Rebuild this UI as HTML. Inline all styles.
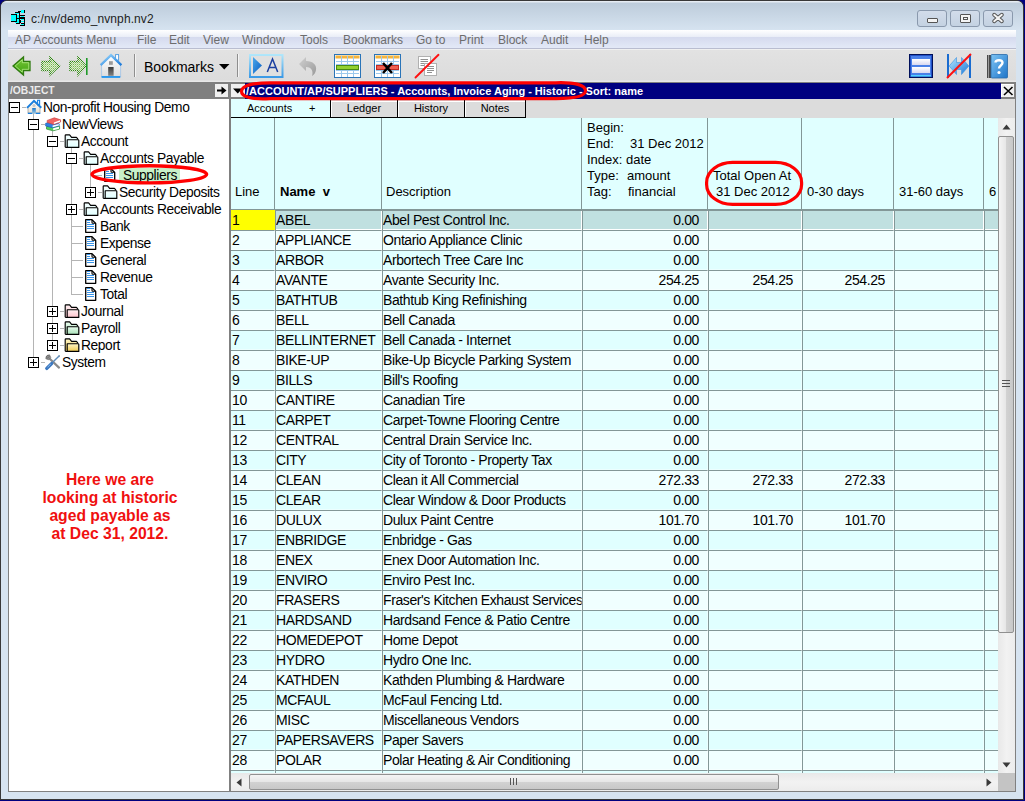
<!DOCTYPE html>
<html><head><meta charset="utf-8">
<style>
*{margin:0;padding:0;box-sizing:border-box}
html,body{width:1025px;height:801px;overflow:hidden;background:#000080}
body{position:relative;font-family:"Liberation Sans",sans-serif;font-size:13px;color:#000}
.a{position:absolute}
.t{position:absolute;white-space:pre;line-height:20px;height:20px}
.r{text-align:right}
.c{font-size:14px;letter-spacing:-0.4px}
.tr{font-size:13.8px;letter-spacing:-0.4px}
svg{position:absolute;overflow:visible}
</style></head><body>

<div class="a" style="left:0;top:0;width:1025px;height:801px;background:#000080"></div>
<div class="a" style="left:0;top:0;width:1024px;height:800px;background:#383838;border-radius:7px 7px 0 0"></div>
<div class="a" style="left:1px;top:1px;width:1022px;height:798px;background:#d6e3f0;border-radius:6px 6px 0 0"></div>
<div class="a" style="left:1px;top:1px;width:1022px;height:29px;background:linear-gradient(#e6ecf3 0,#e6ecf3 1px,#bdccdb 2px,#d6e3f0 29px);border-radius:6px 6px 0 0"></div>
<svg style="left:10px;top:10px" width="16" height="17" viewBox="0 0 16 17" shape-rendering="crispEdges">
<rect x="1" y="4" width="6" height="1" fill="#000"/><rect x="1" y="5" width="5" height="6" fill="#00ffff"/>
<rect x="1" y="11" width="6" height="1" fill="#000"/><rect x="6" y="4" width="1" height="8" fill="#000"/>
<rect x="5" y="2" width="4" height="1" fill="#000"/><rect x="5" y="3" width="4" height="1" fill="#00ffff"/>
<rect x="8" y="1" width="3" height="1" fill="#000"/>
<rect x="11" y="0" width="3" height="3" fill="#00ffff"/><rect x="14" y="0" width="1" height="3" fill="#000"/>
<rect x="9" y="2" width="1" height="12" fill="#000"/>
<rect x="7" y="5" width="2" height="3" fill="#00ffff"/><rect x="7" y="8" width="2" height="1" fill="#000"/>
<rect x="10" y="5" width="5" height="1" fill="#000"/><rect x="11" y="6" width="3" height="1" fill="#00ffff"/>
<rect x="10" y="7" width="5" height="2" fill="#000"/><rect x="11" y="9" width="3" height="1" fill="#00ffff"/>
<rect x="14" y="9" width="1" height="4" fill="#000"/><rect x="11" y="11" width="3" height="1" fill="#00ffff"/>
<rect x="10" y="10" width="1" height="3" fill="#000"/>
<rect x="5" y="12" width="4" height="1" fill="#00ffff"/><rect x="7" y="9" width="2" height="3" fill="#00ffff"/>
<rect x="6" y="13" width="3" height="1" fill="#000"/>
<rect x="11" y="13" width="4" height="1" fill="#000"/><rect x="11" y="14" width="3" height="1" fill="#00ffff"/>
<rect x="10" y="15" width="5" height="1" fill="#000"/><rect x="14" y="13" width="1" height="3" fill="#000"/>
</svg>
<div class="t" style="left:31px;top:9px;font-size:12px;color:#1e1e1e;letter-spacing:0.1px">c:/nv/demo_nvnph.nv2</div>
<div class="a" style="left:917px;top:10px;width:30px;height:17px;border:1px solid #8a99ad;border-radius:3px;background:linear-gradient(#d2dcea,#c4d2e2)"></div><div class="a" style="left:927px;top:18px;width:11px;height:5px;border:1px solid #555;background:#f4f4f4;border-radius:1px"></div>
<div class="a" style="left:950px;top:10px;width:30px;height:17px;border:1px solid #8a99ad;border-radius:3px;background:linear-gradient(#d2dcea,#c4d2e2)"></div><div class="a" style="left:960px;top:14px;width:11px;height:9px;border:1px solid #555;background:#f4f4f4;border-radius:1px"></div><div class="a" style="left:963px;top:17px;width:5px;height:3px;border:1px solid #555"></div>
<div class="a" style="left:983px;top:10px;width:30px;height:17px;border:1px solid #8a99ad;border-radius:3px;background:linear-gradient(#d2dcea,#c4d2e2)"></div><svg style="left:992px;top:13px" width="12" height="10" viewBox="0 0 12 10"><path d="M2.2 1.8L9.8 8.2M9.8 1.8L2.2 8.2" stroke="#555" stroke-width="4" stroke-linecap="round"/><path d="M2.2 1.8L9.8 8.2M9.8 1.8L2.2 8.2" stroke="#f4f4f4" stroke-width="2" stroke-linecap="round"/></svg>
<div class="a" style="left:8px;top:30px;width:1008px;height:19px;background:linear-gradient(#ffffff 0,#e9edf7 7px,#d5daee 7px,#e3e9f7 18px);border-bottom:1px solid #b9bdd0"></div>
<div class="t" style="left:15px;top:31px;font-size:12px;line-height:19px;color:#6d6d6d">AP Accounts Menu</div>
<div class="t" style="left:137px;top:31px;font-size:12px;line-height:19px;color:#6d6d6d">File</div>
<div class="t" style="left:169px;top:31px;font-size:12px;line-height:19px;color:#6d6d6d">Edit</div>
<div class="t" style="left:203px;top:31px;font-size:12px;line-height:19px;color:#6d6d6d">View</div>
<div class="t" style="left:242px;top:31px;font-size:12px;line-height:19px;color:#6d6d6d">Window</div>
<div class="t" style="left:300px;top:31px;font-size:12px;line-height:19px;color:#6d6d6d">Tools</div>
<div class="t" style="left:343px;top:31px;font-size:12px;line-height:19px;color:#6d6d6d">Bookmarks</div>
<div class="t" style="left:416px;top:31px;font-size:12px;line-height:19px;color:#6d6d6d">Go to</div>
<div class="t" style="left:459px;top:31px;font-size:12px;line-height:19px;color:#6d6d6d">Print</div>
<div class="t" style="left:498px;top:31px;font-size:12px;line-height:19px;color:#6d6d6d">Block</div>
<div class="t" style="left:541px;top:31px;font-size:12px;line-height:19px;color:#6d6d6d">Audit</div>
<div class="t" style="left:584px;top:31px;font-size:12px;line-height:19px;color:#6d6d6d">Help</div>
<div class="a" style="left:8px;top:49px;width:1008px;height:33px;background:linear-gradient(#f0f0f0 0,#f0f0f0 1px,#e2e2e2 1px,#dcdcdc 31px,#e8e8e8 32px)"></div>
<svg style="left:12px;top:56px" width="20" height="21" viewBox="0 0 20 21">
<defs><linearGradient id="gA" x1="0" y1="0" x2="0" y2="1"><stop offset="0" stop-color="#78c838"/><stop offset="1" stop-color="#3ea010"/></linearGradient></defs>
<path d="M1 10L11.5 1V5.5H18V14.5H11.5V19Z" fill="url(#gA)" stroke="#2f7a10" stroke-width="1.3" stroke-linejoin="miter"/>
<path d="M3.2 10L10.3 3.8V6.7H16.8V13.3H10.3V16.2Z" fill="none" stroke="#b4ec88" stroke-width="0.8"/>
</svg>
<svg style="left:41px;top:56px" width="20" height="21" viewBox="0 0 20 21"><defs><pattern id="dp" width="2" height="2" patternUnits="userSpaceOnUse"><rect width="1" height="1" fill="#2f8a10"/><rect x="1" y="1" width="1" height="1" fill="#2f8a10"/></pattern><pattern id="dl" width="2" height="2" patternUnits="userSpaceOnUse"><rect width="1" height="1" fill="#78c848"/><rect x="1" y="1" width="1" height="1" fill="#a8e080"/></pattern></defs>
<path d="M1 5.5H9V1L18.5 10L9 19V14.5H1Z" fill="url(#dl)" stroke="url(#dp)" stroke-width="1.6"/>
</svg>
<svg style="left:69px;top:56px" width="20" height="21" viewBox="0 0 20 21">
<path d="M1 5.5H9V1L17 10L9 19V14.5H1Z" fill="url(#dl)" stroke="url(#dp)" stroke-width="1.6"/>
<rect x="17" y="2" width="1.6" height="17" fill="#1f9a2a"/>
</svg>
<svg style="left:99px;top:53px" width="25" height="26" viewBox="0 0 25 26">
<defs><linearGradient id="hw" x1="0" y1="0" x2="0" y2="1"><stop offset="0" stop-color="#fff"/><stop offset="1" stop-color="#dcdcdc"/></linearGradient>
<linearGradient id="hb" x1="0" y1="0" x2="1" y2="1"><stop offset="0" stop-color="#9ad8ff"/><stop offset="1" stop-color="#1a78d8"/></linearGradient>
<linearGradient id="hd" x1="0" y1="0" x2="0" y2="1"><stop offset="0" stop-color="#3a3a3a"/><stop offset="1" stop-color="#808080"/></linearGradient></defs>
<path d="M2.6 12.3V24H21.6V12.3L12 3Z" fill="url(#hw)" stroke="#8ab8e8" stroke-width="0.6"/>
<rect x="16.6" y="1.6" width="3" height="5.6" fill="#fff" stroke="#4a98e0" stroke-width="0.9"/>
<path d="M1.6 12.2L12 2.2L22.4 12.2" fill="none" stroke="url(#hb)" stroke-width="2.3"/>
<rect x="10" y="8.2" width="3.8" height="3.6" fill="#9a9a9a"/>
<rect x="9.2" y="14" width="5.4" height="8.8" fill="url(#hd)"/>
<rect x="2.6" y="23" width="18.6" height="1.9" fill="#2a98ee"/>
</svg>
<div class="a" style="left:134px;top:54px;width:1px;height:23px;background:#8e8e8e"></div>
<div class="a" style="left:135px;top:54px;width:1px;height:23px;background:#f4f4f4"></div>
<div class="t" style="left:144px;top:57px;font-size:14px;line-height:20px;color:#000">Bookmarks</div>
<svg style="left:219px;top:64px" width="11" height="6" viewBox="0 0 11 6"><path d="M0 0H10.5L5.25 5.5Z" fill="#000"/></svg>
<div class="a" style="left:237px;top:54px;width:1px;height:23px;background:#8e8e8e"></div>
<div class="a" style="left:238px;top:54px;width:1px;height:23px;background:#f4f4f4"></div>
<svg style="left:249px;top:54px" width="35" height="24" viewBox="0 0 35 24">
<defs><linearGradient id="ab" x1="0" y1="0" x2="0" y2="1"><stop offset="0" stop-color="#b0e6fa"/><stop offset="1" stop-color="#3b9ae6"/></linearGradient>
<linearGradient id="at" x1="0" y1="0" x2="1" y2="1"><stop offset="0" stop-color="#4aa8ec"/><stop offset="1" stop-color="#0a5cc0"/></linearGradient></defs>
<rect x="1" y="1" width="32.5" height="22" fill="#e0e0e0" stroke="url(#ab)" stroke-width="2"/>
<path d="M4 3V20L13 11.5Z" fill="url(#at)"/>
<path d="M18.3 18L23.5 5L28.7 18M20 13.6H27" fill="none" stroke="#1a3fa0" stroke-width="1.5"/>
</svg>
<svg style="left:298px;top:56px" width="20" height="20" viewBox="0 0 20 20">
<defs><linearGradient id="ug" x1="0" y1="0" x2="1" y2="1"><stop offset="0" stop-color="#d0d0d0"/><stop offset="1" stop-color="#9a9a9a"/></linearGradient></defs>
<path d="M1 8L8 1V5C15 5 19 9 18 14C17.5 17 16 19 14 20C15.5 16 14 11 8 11V15Z" fill="url(#ug)"/>
</svg>
<svg style="left:334px;top:54px" width="27" height="24" viewBox="0 0 27 24"><rect x="0.5" y="0.5" width="26" height="23" fill="#fff" stroke="#2a74b8"/><rect x="1.5" y="1.5" width="24" height="3" fill="#f4b43c"/><path d="M2 7.5H25" stroke="#9cc8ec" stroke-width="1"/><path d="M2 10.5H25" stroke="#9cc8ec" stroke-width="1"/><path d="M2 16.5H25" stroke="#9cc8ec" stroke-width="1"/><path d="M2 19.5H25" stroke="#9cc8ec" stroke-width="1"/><path d="M7.5 2V23" stroke="#9cc8ec" stroke-width="1"/><path d="M13.5 2V23" stroke="#9cc8ec" stroke-width="1"/><path d="M19.5 2V23" stroke="#9cc8ec" stroke-width="1"/><rect x="2.5" y="11.5" width="22" height="4" fill="#92d030" stroke="#4a8a10"/></svg>
<svg style="left:374px;top:54px" width="27" height="24" viewBox="0 0 27 24"><rect x="0.5" y="0.5" width="26" height="23" fill="#fff" stroke="#2a74b8"/><rect x="1.5" y="1.5" width="24" height="3" fill="#f4b43c"/><path d="M2 7.5H25" stroke="#9cc8ec" stroke-width="1"/><path d="M2 10.5H25" stroke="#9cc8ec" stroke-width="1"/><path d="M2 16.5H25" stroke="#9cc8ec" stroke-width="1"/><path d="M2 19.5H25" stroke="#9cc8ec" stroke-width="1"/><path d="M7.5 2V23" stroke="#9cc8ec" stroke-width="1"/><path d="M13.5 2V23" stroke="#9cc8ec" stroke-width="1"/><path d="M19.5 2V23" stroke="#9cc8ec" stroke-width="1"/><rect x="2.5" y="11.5" width="22" height="4" fill="#f06050" stroke="#c02a20"/><path d="M9 9L18 19M18 9L9 19" stroke="#000" stroke-width="2.6"/></svg>
<svg style="left:414px;top:54px" width="26" height="25" viewBox="0 0 26 25">
<rect x="4.5" y="2.5" width="12" height="12" fill="#fff" stroke="#b0b0b0"/>
<path d="M6.5 5.5H14M6.5 7.5H14M6.5 9.5H14M6.5 11.5H13" stroke="#909090"/>
<rect x="10.5" y="9.5" width="12" height="12" fill="#fff" stroke="#b0b0b0"/>
<path d="M13 12.5H20M13 14.5H20M13 16.5H20M13 18.5H18" stroke="#909090"/>
<path d="M1.5 23.5L24.5 0.8" stroke="#ff1010" stroke-width="1.9" stroke-linecap="round"/>
</svg>
<svg style="left:909px;top:54px" width="24" height="24" viewBox="0 0 24 24">
<defs><linearGradient id="sw" x1="0" y1="0" x2="0" y2="1"><stop offset="0" stop-color="#fff"/><stop offset="1" stop-color="#d8d8f0"/></linearGradient></defs>
<rect x="0.5" y="0.5" width="23" height="23" fill="#2050c8" stroke="#00105a"/>
<rect x="2" y="2" width="20" height="20" fill="#4a80e8"/>
<rect x="3" y="5" width="18" height="6" fill="url(#sw)"/>
<rect x="3" y="13" width="18" height="6" fill="url(#sw)"/>
<rect x="2" y="21" width="20" height="1.5" fill="#50d0ff"/>
</svg>
<svg style="left:946px;top:54px" width="26" height="24" viewBox="0 0 26 24">
<defs><linearGradient id="rb" x1="0" y1="0" x2="1" y2="1"><stop offset="0" stop-color="#b8e8ff"/><stop offset="1" stop-color="#1a78d8"/></linearGradient></defs>
<rect x="1" y="0" width="2" height="24" fill="#1a6cd0"/><rect x="23" y="0" width="2" height="24" fill="#1a6cd0"/>
<path d="M3.2 12L10.5 3.5V8.5H15.5V3.5L22.8 12L15.5 20.5V15.5H10.5V20.5Z" fill="url(#rb)" stroke="#3a90e0" stroke-width="0.6"/>
<path d="M1 24L25 0" stroke="#ff1010" stroke-width="1.9"/>
</svg>
<svg style="left:987px;top:54px" width="21" height="24" viewBox="0 0 21 24">
<defs><linearGradient id="hk" x1="0" y1="0" x2="1" y2="1"><stop offset="0" stop-color="#7cc4f4"/><stop offset="1" stop-color="#1f74c8"/></linearGradient></defs>
<rect x="0" y="1" width="4" height="23" fill="#4a4a4a"/>
<rect x="1" y="1" width="1" height="23" fill="#9a9a9a"/>
<rect x="4" y="0.5" width="16.5" height="23.5" rx="1" fill="url(#hk)" stroke="#2a6aa8" stroke-width="0.8"/>
<path d="M8.5 8.5C8.5 5.5 15.5 5.2 15.5 8.8C15.5 11.5 12 11.5 12 14.5" fill="none" stroke="#fff" stroke-width="2.4"/>
<circle cx="12" cy="18.5" r="1.6" fill="#fff"/>
</svg>
<div class="a" style="left:8px;top:82px;width:1008px;height:17px;background:#808080"></div>
<div class="t" style="left:10px;top:83px;height:16px;line-height:16px;font-size:10.3px;font-weight:bold;color:#ececec">/OBJECT</div>
<div class="a" style="left:215px;top:84px;width:13px;height:13px;background:#f0f0f0"></div>
<svg style="left:217px;top:86px" width="10" height="9" viewBox="0 0 10 9"><path d="M0 4.5H6" stroke="#000" stroke-width="2"/><path d="M4.5 0.5L9.5 4.5L4.5 8.5Z" fill="#000"/></svg>
<div class="a" style="left:231px;top:84px;width:14px;height:13px;background:#f0f0f0"></div>
<svg style="left:233px;top:88px" width="10" height="6" viewBox="0 0 10 6"><path d="M0 0.5H9.5L4.75 5.5Z" fill="#000"/></svg>
<div class="a" style="left:245px;top:83px;width:756px;height:16px;background:#000080"></div>
<div class="t" style="left:246px;top:83px;height:16px;line-height:16px;font-size:11px;font-weight:bold;color:#fff">/ACCOUNT/AP/SUPPLIERS - Accounts, Invoice Aging - Historic - Sort: name</div>
<div class="a" style="left:1001px;top:84px;width:13px;height:13px;background:#f0f0f0;border-top:1px solid #fff;border-left:1px solid #fff"></div>
<svg style="left:1003px;top:86px" width="11" height="10" viewBox="0 0 11 10"><path d="M1 1L9.5 9M9.5 1L1 9" stroke="#000" stroke-width="1.6"/></svg>
<div class="a" style="left:8px;top:99px;width:221px;height:693px;background:#fff;border-left:1px solid #808080;border-bottom:1px solid #808080"></div>
<div class="a" style="left:229px;top:99px;width:2px;height:693px;background:#808080"></div>
<div class="a" style="left:1015px;top:82px;width:1px;height:710px;background:#808080"></div>
<div class="a" style="left:231px;top:791px;width:785px;height:1px;background:#808080"></div>
<div class="a" style="left:33px;top:113px;width:1px;height:249px;background:#b4b4b4"></div>
<div class="a" style="left:52px;top:131px;width:1px;height:214px;background:#b4b4b4"></div>
<div class="a" style="left:71px;top:148px;width:1px;height:146px;background:#b4b4b4"></div>
<div class="a" style="left:90px;top:165px;width:1px;height:27px;background:#b4b4b4"></div>
<div class="a" style="left:9px;top:102px;width:11px;height:11px;border:1px solid #000;background:#fff"></div><div class="a" style="left:11px;top:107px;width:7px;height:1px;background:#000"></div>
<div class="a" style="left:22px;top:107px;width:4px;height:1px;background:#b4b4b4"></div>
<svg style="left:26px;top:99px" width="17" height="16" viewBox="0 0 17 16">
<defs><linearGradient id="th" x1="0" y1="0" x2="0" y2="1"><stop offset="0" stop-color="#ffffff"/><stop offset="1" stop-color="#e4e0d4"/></linearGradient>
<linearGradient id="td" x1="0" y1="0" x2="0" y2="1"><stop offset="0" stop-color="#1a78d0"/><stop offset="1" stop-color="#9cc8e0"/></linearGradient></defs>
<path d="M2 8.5V14H14V8.5L8 2.8Z" fill="url(#th)" stroke="#9a9a9a" stroke-width="0.7"/>
<circle cx="8" cy="6.5" r="1.6" fill="#c8c8c8"/>
<rect x="11.6" y="1.3" width="2" height="4.5" fill="#fff" stroke="#1a80e0" stroke-width="1.1"/>
<path d="M1 8.8L8 1.8L15.3 8.8" fill="none" stroke="#1a80e0" stroke-width="1.9" stroke-linejoin="miter"/>
<rect x="6.2" y="9" width="3.6" height="5.6" fill="url(#td)"/>
<path d="M1.8 14.3H6.2M9.8 14.3H14.3" stroke="#1a80e0" stroke-width="1.2"/>
</svg>
<div class="t tr" style="left:43px;top:98px;color:#000">Non-profit Housing Demo</div>
<div class="a" style="left:28px;top:119px;width:11px;height:11px;border:1px solid #000;background:#fff"></div><div class="a" style="left:30px;top:124px;width:7px;height:1px;background:#000"></div>
<div class="a" style="left:41px;top:124px;width:4px;height:1px;background:#b4b4b4"></div>
<svg style="left:45px;top:117px" width="17" height="15" viewBox="0 0 17 15">
<path d="M1.5 9.6L8 8.2L14.6 9.2V12.1L8 13.8L1.5 12.1Z" fill="#52d05c" stroke="#2a8a34" stroke-width="0.7"/>
<path d="M8.2 11.3L14 9.8V11.8L8.2 13.2Z" fill="#fff"/>
<path d="M0.6 6.3L6 5L14.2 6.8V8.7L7.5 10.8L0.6 9Z" fill="#2f80e4" stroke="#1a58b0" stroke-width="0.6"/>
<path d="M7.6 8.6L13.8 7.1V8.5L7.6 10.3Z" fill="#fff"/>
<path d="M2.2 3.4L9.3 0.8L15.6 2.8V5L8.7 7.6L2.2 5.5Z" fill="#f06262" stroke="#c03a3a" stroke-width="0.6"/>
<path d="M8.9 5.5L15 3.3V4.8L8.9 7.1Z" fill="#fff"/>
</svg>
<div class="t tr" style="left:62px;top:115px;color:#000">NewViews</div>
<div class="a" style="left:47px;top:136px;width:11px;height:11px;border:1px solid #000;background:#fff"></div><div class="a" style="left:49px;top:141px;width:7px;height:1px;background:#000"></div>
<div class="a" style="left:60px;top:141px;width:4px;height:1px;background:#b4b4b4"></div>
<svg style="left:64px;top:134px" width="16" height="15" viewBox="0 0 16 15">
<defs><linearGradient id="fg64_134" x1="0" y1="0" x2="0" y2="1"><stop offset="0" stop-color="#f4ffff"/><stop offset="1" stop-color="#e0ffff"/></linearGradient></defs>
<path d="M1.2 13.3V1.6Q1.2 0.9 1.9 0.9H5.6L7.6 3.3H12.4L13.6 4.6V5.6" fill="url(#fg64_134)" stroke="#000" stroke-width="1.15" stroke-linejoin="round"/>
<path d="M3.2 5.7H14.1Q14.8 5.7 14.8 6.4V13.4H3.2Z" fill="url(#fg64_134)" stroke="#000" stroke-width="1.15" stroke-linejoin="round"/>
<path d="M1.2 13.4H3.2" stroke="#000" stroke-width="1.15"/>
</svg>
<div class="t tr" style="left:81px;top:132px;color:#000">Account</div>
<div class="a" style="left:66px;top:153px;width:11px;height:11px;border:1px solid #000;background:#fff"></div><div class="a" style="left:68px;top:158px;width:7px;height:1px;background:#000"></div>
<div class="a" style="left:79px;top:158px;width:4px;height:1px;background:#b4b4b4"></div>
<svg style="left:83px;top:151px" width="16" height="15" viewBox="0 0 16 15">
<defs><linearGradient id="fg83_151" x1="0" y1="0" x2="0" y2="1"><stop offset="0" stop-color="#f4ffff"/><stop offset="1" stop-color="#e0ffff"/></linearGradient></defs>
<path d="M1.2 13.3V1.6Q1.2 0.9 1.9 0.9H5.6L7.6 3.3H12.4L13.6 4.6V5.6" fill="url(#fg83_151)" stroke="#000" stroke-width="1.15" stroke-linejoin="round"/>
<path d="M3.2 5.7H14.1Q14.8 5.7 14.8 6.4V13.4H3.2Z" fill="url(#fg83_151)" stroke="#000" stroke-width="1.15" stroke-linejoin="round"/>
<path d="M1.2 13.4H3.2" stroke="#000" stroke-width="1.15"/>
</svg>
<div class="t tr" style="left:100px;top:149px;color:#000">Accounts Payable</div>
<div class="a" style="left:90px;top:175px;width:12px;height:1px;background:#b4b4b4"></div>
<svg style="left:104px;top:168px" width="12" height="14" viewBox="0 0 12 14">
<path d="M0.7 0.7H7L10.7 4.4V13.3H0.7Z" fill="#fff" stroke="#000" stroke-width="1.3" stroke-linejoin="round"/>
<path d="M7 0.9V3.6Q7 4.3 7.7 4.3H10.5" fill="none" stroke="#000" stroke-width="1.1"/>
<path d="M2 1.5H5M2 3.5H5M2 5.5H9M2 7.5H9M2 9.5H9" stroke="#3a94e8" stroke-width="1"/>
</svg>
<div class="a" style="left:119px;top:168px;width:61px;height:13px;background:#c8f0c8"></div>
<div class="t tr" style="left:123px;top:166px;color:#000">Suppliers</div>
<div class="a" style="left:85px;top:187px;width:11px;height:11px;border:1px solid #000;background:#fff"></div><div class="a" style="left:87px;top:192px;width:7px;height:1px;background:#000"></div><div class="a" style="left:90px;top:189px;width:1px;height:7px;background:#000"></div>
<div class="a" style="left:98px;top:192px;width:4px;height:1px;background:#b4b4b4"></div>
<svg style="left:102px;top:185px" width="16" height="15" viewBox="0 0 16 15">
<defs><linearGradient id="fg102_185" x1="0" y1="0" x2="0" y2="1"><stop offset="0" stop-color="#f4ffff"/><stop offset="1" stop-color="#e0ffff"/></linearGradient></defs>
<path d="M1.2 13.3V1.6Q1.2 0.9 1.9 0.9H5.6L7.6 3.3H12.4L13.6 4.6V5.6" fill="url(#fg102_185)" stroke="#000" stroke-width="1.15" stroke-linejoin="round"/>
<path d="M3.2 5.7H14.1Q14.8 5.7 14.8 6.4V13.4H3.2Z" fill="url(#fg102_185)" stroke="#000" stroke-width="1.15" stroke-linejoin="round"/>
<path d="M1.2 13.4H3.2" stroke="#000" stroke-width="1.15"/>
</svg>
<div class="t tr" style="left:119px;top:183px;color:#000">Security Deposits</div>
<div class="a" style="left:66px;top:204px;width:11px;height:11px;border:1px solid #000;background:#fff"></div><div class="a" style="left:68px;top:209px;width:7px;height:1px;background:#000"></div><div class="a" style="left:71px;top:206px;width:1px;height:7px;background:#000"></div>
<div class="a" style="left:79px;top:209px;width:4px;height:1px;background:#b4b4b4"></div>
<svg style="left:83px;top:202px" width="16" height="15" viewBox="0 0 16 15">
<defs><linearGradient id="fg83_202" x1="0" y1="0" x2="0" y2="1"><stop offset="0" stop-color="#f4ffff"/><stop offset="1" stop-color="#e0ffff"/></linearGradient></defs>
<path d="M1.2 13.3V1.6Q1.2 0.9 1.9 0.9H5.6L7.6 3.3H12.4L13.6 4.6V5.6" fill="url(#fg83_202)" stroke="#000" stroke-width="1.15" stroke-linejoin="round"/>
<path d="M3.2 5.7H14.1Q14.8 5.7 14.8 6.4V13.4H3.2Z" fill="url(#fg83_202)" stroke="#000" stroke-width="1.15" stroke-linejoin="round"/>
<path d="M1.2 13.4H3.2" stroke="#000" stroke-width="1.15"/>
</svg>
<div class="t tr" style="left:100px;top:200px;color:#000">Accounts Receivable</div>
<div class="a" style="left:71px;top:226px;width:12px;height:1px;background:#b4b4b4"></div>
<svg style="left:85px;top:219px" width="12" height="14" viewBox="0 0 12 14">
<path d="M0.7 0.7H7L10.7 4.4V13.3H0.7Z" fill="#fff" stroke="#000" stroke-width="1.3" stroke-linejoin="round"/>
<path d="M7 0.9V3.6Q7 4.3 7.7 4.3H10.5" fill="none" stroke="#000" stroke-width="1.1"/>
<path d="M2 1.5H5M2 3.5H5M2 5.5H9M2 7.5H9M2 9.5H9" stroke="#3a94e8" stroke-width="1"/>
</svg>
<div class="t tr" style="left:100px;top:217px;color:#000">Bank</div>
<div class="a" style="left:71px;top:243px;width:12px;height:1px;background:#b4b4b4"></div>
<svg style="left:85px;top:236px" width="12" height="14" viewBox="0 0 12 14">
<path d="M0.7 0.7H7L10.7 4.4V13.3H0.7Z" fill="#fff" stroke="#000" stroke-width="1.3" stroke-linejoin="round"/>
<path d="M7 0.9V3.6Q7 4.3 7.7 4.3H10.5" fill="none" stroke="#000" stroke-width="1.1"/>
<path d="M2 1.5H5M2 3.5H5M2 5.5H9M2 7.5H9M2 9.5H9" stroke="#3a94e8" stroke-width="1"/>
</svg>
<div class="t tr" style="left:100px;top:234px;color:#000">Expense</div>
<div class="a" style="left:71px;top:260px;width:12px;height:1px;background:#b4b4b4"></div>
<svg style="left:85px;top:253px" width="12" height="14" viewBox="0 0 12 14">
<path d="M0.7 0.7H7L10.7 4.4V13.3H0.7Z" fill="#fff" stroke="#000" stroke-width="1.3" stroke-linejoin="round"/>
<path d="M7 0.9V3.6Q7 4.3 7.7 4.3H10.5" fill="none" stroke="#000" stroke-width="1.1"/>
<path d="M2 1.5H5M2 3.5H5M2 5.5H9M2 7.5H9M2 9.5H9" stroke="#3a94e8" stroke-width="1"/>
</svg>
<div class="t tr" style="left:100px;top:251px;color:#000">General</div>
<div class="a" style="left:71px;top:277px;width:12px;height:1px;background:#b4b4b4"></div>
<svg style="left:85px;top:270px" width="12" height="14" viewBox="0 0 12 14">
<path d="M0.7 0.7H7L10.7 4.4V13.3H0.7Z" fill="#fff" stroke="#000" stroke-width="1.3" stroke-linejoin="round"/>
<path d="M7 0.9V3.6Q7 4.3 7.7 4.3H10.5" fill="none" stroke="#000" stroke-width="1.1"/>
<path d="M2 1.5H5M2 3.5H5M2 5.5H9M2 7.5H9M2 9.5H9" stroke="#3a94e8" stroke-width="1"/>
</svg>
<div class="t tr" style="left:100px;top:268px;color:#000">Revenue</div>
<div class="a" style="left:71px;top:294px;width:12px;height:1px;background:#b4b4b4"></div>
<svg style="left:85px;top:287px" width="12" height="14" viewBox="0 0 12 14">
<path d="M0.7 0.7H7L10.7 4.4V13.3H0.7Z" fill="#fff" stroke="#000" stroke-width="1.3" stroke-linejoin="round"/>
<path d="M7 0.9V3.6Q7 4.3 7.7 4.3H10.5" fill="none" stroke="#000" stroke-width="1.1"/>
<path d="M2 1.5H5M2 3.5H5M2 5.5H9M2 7.5H9M2 9.5H9" stroke="#3a94e8" stroke-width="1"/>
</svg>
<div class="t tr" style="left:100px;top:285px;color:#000">Total</div>
<div class="a" style="left:47px;top:306px;width:11px;height:11px;border:1px solid #000;background:#fff"></div><div class="a" style="left:49px;top:311px;width:7px;height:1px;background:#000"></div><div class="a" style="left:52px;top:308px;width:1px;height:7px;background:#000"></div>
<div class="a" style="left:60px;top:311px;width:4px;height:1px;background:#b4b4b4"></div>
<svg style="left:64px;top:304px" width="16" height="15" viewBox="0 0 16 15">
<defs><linearGradient id="fg64_304" x1="0" y1="0" x2="0" y2="1"><stop offset="0" stop-color="#fff0f2"/><stop offset="1" stop-color="#ffc4cc"/></linearGradient></defs>
<path d="M1.2 13.3V1.6Q1.2 0.9 1.9 0.9H5.6L7.6 3.3H12.4L13.6 4.6V5.6" fill="url(#fg64_304)" stroke="#000" stroke-width="1.15" stroke-linejoin="round"/>
<path d="M3.2 5.7H14.1Q14.8 5.7 14.8 6.4V13.4H3.2Z" fill="url(#fg64_304)" stroke="#000" stroke-width="1.15" stroke-linejoin="round"/>
<path d="M1.2 13.4H3.2" stroke="#000" stroke-width="1.15"/>
</svg>
<div class="t tr" style="left:81px;top:302px;color:#000">Journal</div>
<div class="a" style="left:47px;top:323px;width:11px;height:11px;border:1px solid #000;background:#fff"></div><div class="a" style="left:49px;top:328px;width:7px;height:1px;background:#000"></div><div class="a" style="left:52px;top:325px;width:1px;height:7px;background:#000"></div>
<div class="a" style="left:60px;top:328px;width:4px;height:1px;background:#b4b4b4"></div>
<svg style="left:64px;top:321px" width="16" height="15" viewBox="0 0 16 15">
<defs><linearGradient id="fg64_321" x1="0" y1="0" x2="0" y2="1"><stop offset="0" stop-color="#eafcef"/><stop offset="1" stop-color="#a8e2b8"/></linearGradient></defs>
<path d="M1.2 13.3V1.6Q1.2 0.9 1.9 0.9H5.6L7.6 3.3H12.4L13.6 4.6V5.6" fill="url(#fg64_321)" stroke="#000" stroke-width="1.15" stroke-linejoin="round"/>
<path d="M3.2 5.7H14.1Q14.8 5.7 14.8 6.4V13.4H3.2Z" fill="url(#fg64_321)" stroke="#000" stroke-width="1.15" stroke-linejoin="round"/>
<path d="M1.2 13.4H3.2" stroke="#000" stroke-width="1.15"/>
</svg>
<div class="t tr" style="left:81px;top:319px;color:#000">Payroll</div>
<div class="a" style="left:47px;top:340px;width:11px;height:11px;border:1px solid #000;background:#fff"></div><div class="a" style="left:49px;top:345px;width:7px;height:1px;background:#000"></div><div class="a" style="left:52px;top:342px;width:1px;height:7px;background:#000"></div>
<div class="a" style="left:60px;top:345px;width:4px;height:1px;background:#b4b4b4"></div>
<svg style="left:64px;top:338px" width="16" height="15" viewBox="0 0 16 15">
<defs><linearGradient id="fg64_338" x1="0" y1="0" x2="0" y2="1"><stop offset="0" stop-color="#fff6c8"/><stop offset="1" stop-color="#f2cc50"/></linearGradient></defs>
<path d="M1.2 13.3V1.6Q1.2 0.9 1.9 0.9H5.6L7.6 3.3H12.4L13.6 4.6V5.6" fill="url(#fg64_338)" stroke="#000" stroke-width="1.15" stroke-linejoin="round"/>
<path d="M3.2 5.7H14.1Q14.8 5.7 14.8 6.4V13.4H3.2Z" fill="url(#fg64_338)" stroke="#000" stroke-width="1.15" stroke-linejoin="round"/>
<path d="M1.2 13.4H3.2" stroke="#000" stroke-width="1.15"/>
</svg>
<div class="t tr" style="left:81px;top:336px;color:#000">Report</div>
<div class="a" style="left:28px;top:357px;width:11px;height:11px;border:1px solid #000;background:#fff"></div><div class="a" style="left:30px;top:362px;width:7px;height:1px;background:#000"></div><div class="a" style="left:33px;top:359px;width:1px;height:7px;background:#000"></div>
<div class="a" style="left:41px;top:362px;width:4px;height:1px;background:#b4b4b4"></div>
<svg style="left:45px;top:354px" width="16" height="16" viewBox="0 0 16 16">
<path d="M4.2 4.2L14 13.6" stroke="#8a8a8a" stroke-width="2.2" stroke-linecap="round"/>
<path d="M1.2 2.8L2.8 1.2L4.2 2.6L2.6 4.2Z M0.8 4.8Q0.6 1 4.6 0.8L5.8 3.6L3.6 5.8Z" fill="#8e8e8e" stroke="#5a5a5a" stroke-width="0.5"/>
<path d="M6.5 9.5L13.8 2.2" stroke="#5c8ab8" stroke-width="1.4"/>
<path d="M13 1.6L15 1.2L14.6 3.2Z" fill="#4a78a8"/>
<path d="M1.8 14.4L6.6 9.6" stroke="#3c78c0" stroke-width="3.4" stroke-linecap="round"/>
<path d="M2.6 13.2L5.8 10" stroke="#8cc0f0" stroke-width="0.9"/>
</svg>
<div class="t tr" style="left:62px;top:353px;color:#000">System</div>
<div class="a" style="left:20px;top:471px;width:180px;text-align:center;color:#f01010;font-weight:bold;font-size:15.7px;line-height:18px">Here we are<br>looking at historic<br>aged payable as<br>at Dec 31, 2012.</div>
<div class="a" style="left:231px;top:99px;width:784px;height:19px;background:#dcdcdc"></div>
<div class="a" style="left:231px;top:99px;width:99px;height:18px;background:#e0ffff"></div>
<div class="a" style="left:330px;top:99px;width:1px;height:19px;background:#000"></div>
<div class="a" style="left:331px;top:101px;width:1px;height:16px;background:#fff"></div>
<div class="a" style="left:331px;top:101px;width:66px;height:1px;background:#fff"></div>
<div class="t" style="left:331px;top:99px;width:66px;text-align:center;font-size:11px;line-height:18px">Ledger</div>
<div class="a" style="left:397px;top:99px;width:1px;height:19px;background:#000"></div>
<div class="a" style="left:398px;top:101px;width:1px;height:16px;background:#fff"></div>
<div class="a" style="left:398px;top:101px;width:66px;height:1px;background:#fff"></div>
<div class="t" style="left:398px;top:99px;width:66px;text-align:center;font-size:11px;line-height:18px">History</div>
<div class="a" style="left:464px;top:99px;width:1px;height:19px;background:#000"></div>
<div class="a" style="left:465px;top:101px;width:1px;height:16px;background:#fff"></div>
<div class="a" style="left:465px;top:101px;width:60px;height:1px;background:#fff"></div>
<div class="t" style="left:465px;top:99px;width:60px;text-align:center;font-size:11px;line-height:18px">Notes</div>
<div class="a" style="left:525px;top:99px;width:1px;height:19px;background:#000"></div>
<div class="a" style="left:231px;top:117px;width:295px;height:1px;background:#000"></div>
<div class="t" style="left:247px;top:99px;font-size:11px;line-height:18px">Accounts</div>
<div class="t" style="left:309px;top:99px;font-size:11px;line-height:18px">+</div>
<div class="a" style="left:231px;top:118px;width:767px;height:655px;background:#e0ffff"></div>
<div class="a" style="left:274px;top:118px;width:1px;height:91px;background:#839797"></div>
<div class="a" style="left:381px;top:118px;width:1px;height:91px;background:#839797"></div>
<div class="a" style="left:581px;top:118px;width:1px;height:91px;background:#839797"></div>
<div class="a" style="left:707px;top:118px;width:1px;height:91px;background:#839797"></div>
<div class="a" style="left:801px;top:118px;width:1px;height:91px;background:#839797"></div>
<div class="a" style="left:893px;top:118px;width:1px;height:91px;background:#839797"></div>
<div class="a" style="left:983px;top:118px;width:1px;height:91px;background:#839797"></div>
<div class="a" style="left:231px;top:209px;width:767px;height:1px;background:#839797"></div>
<div class="t" style="left:235px;top:184px;height:16px;line-height:16px;">Line</div>
<div class="t" style="left:280px;top:184px;height:16px;line-height:16px;font-weight:bold">Name  v</div>
<div class="t" style="left:386px;top:184px;height:16px;line-height:16px;">Description</div>
<div class="t" style="left:587px;top:120px;height:16px;line-height:16px;">Begin:</div>
<div class="t" style="left:587px;top:136px;height:16px;line-height:16px;">End:</div>
<div class="t" style="left:630px;top:136px;height:16px;line-height:16px;">31 Dec 2012</div>
<div class="t" style="left:587px;top:152px;height:16px;line-height:16px;">Index:</div>
<div class="t" style="left:626px;top:152px;height:16px;line-height:16px;">date</div>
<div class="t" style="left:587px;top:168px;height:16px;line-height:16px;">Type:</div>
<div class="t" style="left:627px;top:168px;height:16px;line-height:16px;">amount</div>
<div class="t" style="left:587px;top:184px;height:16px;line-height:16px;">Tag:</div>
<div class="t" style="left:628px;top:184px;height:16px;line-height:16px;">financial</div>
<div class="t" style="left:713px;top:168px;height:16px;line-height:16px">Total Open At</div>
<div class="t" style="left:716px;top:184px;height:16px;line-height:16px">31 Dec 2012</div>
<div class="t" style="left:807px;top:184px;height:16px;line-height:16px;">0-30 days</div>
<div class="t" style="left:899px;top:184px;height:16px;line-height:16px;">31-60 days</div>
<div class="t" style="left:989px;top:184px;height:16px;line-height:16px;">6</div>
<div class="a" style="left:231px;top:210px;width:767px;height:20px;background:#c0e0e0"></div>
<div class="a" style="left:276px;top:229px;width:722px;height:1px;background:#fff"></div>
<div class="a" style="left:381px;top:210px;width:1px;height:20px;background:#fff"></div>
<div class="a" style="left:581px;top:210px;width:1px;height:20px;background:#fff"></div>
<div class="a" style="left:707px;top:210px;width:1px;height:20px;background:#fff"></div>
<div class="a" style="left:801px;top:210px;width:1px;height:20px;background:#fff"></div>
<div class="a" style="left:893px;top:210px;width:1px;height:20px;background:#fff"></div>
<div class="a" style="left:983px;top:210px;width:1px;height:20px;background:#fff"></div>
<div class="t c" style="left:232px;top:210px">1</div>
<div class="t c" style="left:276px;top:210px">ABEL</div>
<div class="t c" style="left:383px;top:210px">Abel Pest Control Inc.</div>
<div class="t r c" style="left:582px;top:210px;width:117px">0.00</div>
<div class="a" style="left:231px;top:230px;width:767px;height:20px;background:#f0ffff"></div>
<div class="t c" style="left:232px;top:230px">2</div>
<div class="t c" style="left:276px;top:230px">APPLIANCE</div>
<div class="t c" style="left:383px;top:230px">Ontario Appliance Clinic</div>
<div class="t r c" style="left:582px;top:230px;width:117px">0.00</div>
<div class="a" style="left:231px;top:250px;width:767px;height:20px;background:#e0ffff"></div>
<div class="t c" style="left:232px;top:250px">3</div>
<div class="t c" style="left:276px;top:250px">ARBOR</div>
<div class="t c" style="left:383px;top:250px">Arbortech Tree Care Inc</div>
<div class="t r c" style="left:582px;top:250px;width:117px">0.00</div>
<div class="a" style="left:231px;top:270px;width:767px;height:20px;background:#f0ffff"></div>
<div class="t c" style="left:232px;top:270px">4</div>
<div class="t c" style="left:276px;top:270px">AVANTE</div>
<div class="t c" style="left:383px;top:270px">Avante Security Inc.</div>
<div class="t r c" style="left:582px;top:270px;width:117px">254.25</div>
<div class="t r c" style="left:708px;top:270px;width:85px">254.25</div>
<div class="t r c" style="left:802px;top:270px;width:83px">254.25</div>
<div class="a" style="left:231px;top:290px;width:767px;height:20px;background:#e0ffff"></div>
<div class="t c" style="left:232px;top:290px">5</div>
<div class="t c" style="left:276px;top:290px">BATHTUB</div>
<div class="t c" style="left:383px;top:290px">Bathtub King Refinishing</div>
<div class="t r c" style="left:582px;top:290px;width:117px">0.00</div>
<div class="a" style="left:231px;top:310px;width:767px;height:20px;background:#f0ffff"></div>
<div class="t c" style="left:232px;top:310px">6</div>
<div class="t c" style="left:276px;top:310px">BELL</div>
<div class="t c" style="left:383px;top:310px">Bell Canada</div>
<div class="t r c" style="left:582px;top:310px;width:117px">0.00</div>
<div class="a" style="left:231px;top:330px;width:767px;height:20px;background:#e0ffff"></div>
<div class="t c" style="left:232px;top:330px">7</div>
<div class="t c" style="left:276px;top:330px">BELLINTERNET</div>
<div class="t c" style="left:383px;top:330px">Bell Canada - Internet</div>
<div class="t r c" style="left:582px;top:330px;width:117px">0.00</div>
<div class="a" style="left:231px;top:350px;width:767px;height:20px;background:#f0ffff"></div>
<div class="t c" style="left:232px;top:350px">8</div>
<div class="t c" style="left:276px;top:350px">BIKE-UP</div>
<div class="t c" style="left:383px;top:350px">Bike-Up Bicycle Parking System</div>
<div class="t r c" style="left:582px;top:350px;width:117px">0.00</div>
<div class="a" style="left:231px;top:370px;width:767px;height:20px;background:#e0ffff"></div>
<div class="t c" style="left:232px;top:370px">9</div>
<div class="t c" style="left:276px;top:370px">BILLS</div>
<div class="t c" style="left:383px;top:370px">Bill's Roofing</div>
<div class="t r c" style="left:582px;top:370px;width:117px">0.00</div>
<div class="a" style="left:231px;top:390px;width:767px;height:20px;background:#f0ffff"></div>
<div class="t c" style="left:232px;top:390px">10</div>
<div class="t c" style="left:276px;top:390px">CANTIRE</div>
<div class="t c" style="left:383px;top:390px">Canadian Tire</div>
<div class="t r c" style="left:582px;top:390px;width:117px">0.00</div>
<div class="a" style="left:231px;top:410px;width:767px;height:20px;background:#e0ffff"></div>
<div class="t c" style="left:232px;top:410px">11</div>
<div class="t c" style="left:276px;top:410px">CARPET</div>
<div class="t c" style="left:383px;top:410px">Carpet-Towne Flooring Centre</div>
<div class="t r c" style="left:582px;top:410px;width:117px">0.00</div>
<div class="a" style="left:231px;top:430px;width:767px;height:20px;background:#f0ffff"></div>
<div class="t c" style="left:232px;top:430px">12</div>
<div class="t c" style="left:276px;top:430px">CENTRAL</div>
<div class="t c" style="left:383px;top:430px">Central Drain Service Inc.</div>
<div class="t r c" style="left:582px;top:430px;width:117px">0.00</div>
<div class="a" style="left:231px;top:450px;width:767px;height:20px;background:#e0ffff"></div>
<div class="t c" style="left:232px;top:450px">13</div>
<div class="t c" style="left:276px;top:450px">CITY</div>
<div class="t c" style="left:383px;top:450px">City of Toronto - Property Tax</div>
<div class="t r c" style="left:582px;top:450px;width:117px">0.00</div>
<div class="a" style="left:231px;top:470px;width:767px;height:20px;background:#f0ffff"></div>
<div class="t c" style="left:232px;top:470px">14</div>
<div class="t c" style="left:276px;top:470px">CLEAN</div>
<div class="t c" style="left:383px;top:470px">Clean it All Commercial</div>
<div class="t r c" style="left:582px;top:470px;width:117px">272.33</div>
<div class="t r c" style="left:708px;top:470px;width:85px">272.33</div>
<div class="t r c" style="left:802px;top:470px;width:83px">272.33</div>
<div class="a" style="left:231px;top:490px;width:767px;height:20px;background:#e0ffff"></div>
<div class="t c" style="left:232px;top:490px">15</div>
<div class="t c" style="left:276px;top:490px">CLEAR</div>
<div class="t c" style="left:383px;top:490px">Clear Window &amp; Door Products</div>
<div class="t r c" style="left:582px;top:490px;width:117px">0.00</div>
<div class="a" style="left:231px;top:510px;width:767px;height:20px;background:#f0ffff"></div>
<div class="t c" style="left:232px;top:510px">16</div>
<div class="t c" style="left:276px;top:510px">DULUX</div>
<div class="t c" style="left:383px;top:510px">Dulux Paint Centre</div>
<div class="t r c" style="left:582px;top:510px;width:117px">101.70</div>
<div class="t r c" style="left:708px;top:510px;width:85px">101.70</div>
<div class="t r c" style="left:802px;top:510px;width:83px">101.70</div>
<div class="a" style="left:231px;top:530px;width:767px;height:20px;background:#e0ffff"></div>
<div class="t c" style="left:232px;top:530px">17</div>
<div class="t c" style="left:276px;top:530px">ENBRIDGE</div>
<div class="t c" style="left:383px;top:530px">Enbridge - Gas</div>
<div class="t r c" style="left:582px;top:530px;width:117px">0.00</div>
<div class="a" style="left:231px;top:550px;width:767px;height:20px;background:#f0ffff"></div>
<div class="t c" style="left:232px;top:550px">18</div>
<div class="t c" style="left:276px;top:550px">ENEX</div>
<div class="t c" style="left:383px;top:550px">Enex Door Automation Inc.</div>
<div class="t r c" style="left:582px;top:550px;width:117px">0.00</div>
<div class="a" style="left:231px;top:570px;width:767px;height:20px;background:#e0ffff"></div>
<div class="t c" style="left:232px;top:570px">19</div>
<div class="t c" style="left:276px;top:570px">ENVIRO</div>
<div class="t c" style="left:383px;top:570px">Enviro Pest Inc.</div>
<div class="t r c" style="left:582px;top:570px;width:117px">0.00</div>
<div class="a" style="left:231px;top:590px;width:767px;height:20px;background:#f0ffff"></div>
<div class="t c" style="left:232px;top:590px">20</div>
<div class="t c" style="left:276px;top:590px">FRASERS</div>
<div class="t c" style="left:383px;top:590px">Fraser's Kitchen Exhaust Services</div>
<div class="t r c" style="left:582px;top:590px;width:117px">0.00</div>
<div class="a" style="left:231px;top:610px;width:767px;height:20px;background:#e0ffff"></div>
<div class="t c" style="left:232px;top:610px">21</div>
<div class="t c" style="left:276px;top:610px">HARDSAND</div>
<div class="t c" style="left:383px;top:610px">Hardsand Fence &amp; Patio Centre</div>
<div class="t r c" style="left:582px;top:610px;width:117px">0.00</div>
<div class="a" style="left:231px;top:630px;width:767px;height:20px;background:#f0ffff"></div>
<div class="t c" style="left:232px;top:630px">22</div>
<div class="t c" style="left:276px;top:630px">HOMEDEPOT</div>
<div class="t c" style="left:383px;top:630px">Home Depot</div>
<div class="t r c" style="left:582px;top:630px;width:117px">0.00</div>
<div class="a" style="left:231px;top:650px;width:767px;height:20px;background:#e0ffff"></div>
<div class="t c" style="left:232px;top:650px">23</div>
<div class="t c" style="left:276px;top:650px">HYDRO</div>
<div class="t c" style="left:383px;top:650px">Hydro One Inc.</div>
<div class="t r c" style="left:582px;top:650px;width:117px">0.00</div>
<div class="a" style="left:231px;top:670px;width:767px;height:20px;background:#f0ffff"></div>
<div class="t c" style="left:232px;top:670px">24</div>
<div class="t c" style="left:276px;top:670px">KATHDEN</div>
<div class="t c" style="left:383px;top:670px">Kathden Plumbing &amp; Hardware</div>
<div class="t r c" style="left:582px;top:670px;width:117px">0.00</div>
<div class="a" style="left:231px;top:690px;width:767px;height:20px;background:#e0ffff"></div>
<div class="t c" style="left:232px;top:690px">25</div>
<div class="t c" style="left:276px;top:690px">MCFAUL</div>
<div class="t c" style="left:383px;top:690px">McFaul Fencing Ltd.</div>
<div class="t r c" style="left:582px;top:690px;width:117px">0.00</div>
<div class="a" style="left:231px;top:710px;width:767px;height:20px;background:#f0ffff"></div>
<div class="t c" style="left:232px;top:710px">26</div>
<div class="t c" style="left:276px;top:710px">MISC</div>
<div class="t c" style="left:383px;top:710px">Miscellaneous Vendors</div>
<div class="t r c" style="left:582px;top:710px;width:117px">0.00</div>
<div class="a" style="left:231px;top:730px;width:767px;height:20px;background:#e0ffff"></div>
<div class="t c" style="left:232px;top:730px">27</div>
<div class="t c" style="left:276px;top:730px">PAPERSAVERS</div>
<div class="t c" style="left:383px;top:730px">Paper Savers</div>
<div class="t r c" style="left:582px;top:730px;width:117px">0.00</div>
<div class="a" style="left:231px;top:750px;width:767px;height:20px;background:#f0ffff"></div>
<div class="t c" style="left:232px;top:750px">28</div>
<div class="t c" style="left:276px;top:750px">POLAR</div>
<div class="t c" style="left:383px;top:750px">Polar Heating &amp; Air Conditioning</div>
<div class="t r c" style="left:582px;top:750px;width:117px">0.00</div>
<div class="a" style="left:231px;top:210px;width:767px;height:1px;background:#839797"></div>
<div class="a" style="left:231px;top:230px;width:767px;height:1px;background:#839797"></div>
<div class="a" style="left:231px;top:250px;width:767px;height:1px;background:#839797"></div>
<div class="a" style="left:231px;top:270px;width:767px;height:1px;background:#839797"></div>
<div class="a" style="left:231px;top:290px;width:767px;height:1px;background:#839797"></div>
<div class="a" style="left:231px;top:310px;width:767px;height:1px;background:#839797"></div>
<div class="a" style="left:231px;top:330px;width:767px;height:1px;background:#839797"></div>
<div class="a" style="left:231px;top:350px;width:767px;height:1px;background:#839797"></div>
<div class="a" style="left:231px;top:370px;width:767px;height:1px;background:#839797"></div>
<div class="a" style="left:231px;top:390px;width:767px;height:1px;background:#839797"></div>
<div class="a" style="left:231px;top:410px;width:767px;height:1px;background:#839797"></div>
<div class="a" style="left:231px;top:430px;width:767px;height:1px;background:#839797"></div>
<div class="a" style="left:231px;top:450px;width:767px;height:1px;background:#839797"></div>
<div class="a" style="left:231px;top:470px;width:767px;height:1px;background:#839797"></div>
<div class="a" style="left:231px;top:490px;width:767px;height:1px;background:#839797"></div>
<div class="a" style="left:231px;top:510px;width:767px;height:1px;background:#839797"></div>
<div class="a" style="left:231px;top:530px;width:767px;height:1px;background:#839797"></div>
<div class="a" style="left:231px;top:550px;width:767px;height:1px;background:#839797"></div>
<div class="a" style="left:231px;top:570px;width:767px;height:1px;background:#839797"></div>
<div class="a" style="left:231px;top:590px;width:767px;height:1px;background:#839797"></div>
<div class="a" style="left:231px;top:610px;width:767px;height:1px;background:#839797"></div>
<div class="a" style="left:231px;top:630px;width:767px;height:1px;background:#839797"></div>
<div class="a" style="left:231px;top:650px;width:767px;height:1px;background:#839797"></div>
<div class="a" style="left:231px;top:670px;width:767px;height:1px;background:#839797"></div>
<div class="a" style="left:231px;top:690px;width:767px;height:1px;background:#839797"></div>
<div class="a" style="left:231px;top:710px;width:767px;height:1px;background:#839797"></div>
<div class="a" style="left:231px;top:730px;width:767px;height:1px;background:#839797"></div>
<div class="a" style="left:231px;top:750px;width:767px;height:1px;background:#839797"></div>
<div class="a" style="left:231px;top:770px;width:767px;height:1px;background:#839797"></div>
<div class="a" style="left:231px;top:229px;width:767px;height:1px;background:rgba(255,255,255,0.4)"></div>
<div class="a" style="left:231px;top:249px;width:767px;height:1px;background:rgba(255,255,255,0.4)"></div>
<div class="a" style="left:231px;top:269px;width:767px;height:1px;background:rgba(255,255,255,0.4)"></div>
<div class="a" style="left:231px;top:289px;width:767px;height:1px;background:rgba(255,255,255,0.4)"></div>
<div class="a" style="left:231px;top:309px;width:767px;height:1px;background:rgba(255,255,255,0.4)"></div>
<div class="a" style="left:231px;top:329px;width:767px;height:1px;background:rgba(255,255,255,0.4)"></div>
<div class="a" style="left:231px;top:349px;width:767px;height:1px;background:rgba(255,255,255,0.4)"></div>
<div class="a" style="left:231px;top:369px;width:767px;height:1px;background:rgba(255,255,255,0.4)"></div>
<div class="a" style="left:231px;top:389px;width:767px;height:1px;background:rgba(255,255,255,0.4)"></div>
<div class="a" style="left:231px;top:409px;width:767px;height:1px;background:rgba(255,255,255,0.4)"></div>
<div class="a" style="left:231px;top:429px;width:767px;height:1px;background:rgba(255,255,255,0.4)"></div>
<div class="a" style="left:231px;top:449px;width:767px;height:1px;background:rgba(255,255,255,0.4)"></div>
<div class="a" style="left:231px;top:469px;width:767px;height:1px;background:rgba(255,255,255,0.4)"></div>
<div class="a" style="left:231px;top:489px;width:767px;height:1px;background:rgba(255,255,255,0.4)"></div>
<div class="a" style="left:231px;top:509px;width:767px;height:1px;background:rgba(255,255,255,0.4)"></div>
<div class="a" style="left:231px;top:529px;width:767px;height:1px;background:rgba(255,255,255,0.4)"></div>
<div class="a" style="left:231px;top:549px;width:767px;height:1px;background:rgba(255,255,255,0.4)"></div>
<div class="a" style="left:231px;top:569px;width:767px;height:1px;background:rgba(255,255,255,0.4)"></div>
<div class="a" style="left:231px;top:589px;width:767px;height:1px;background:rgba(255,255,255,0.4)"></div>
<div class="a" style="left:231px;top:609px;width:767px;height:1px;background:rgba(255,255,255,0.4)"></div>
<div class="a" style="left:231px;top:629px;width:767px;height:1px;background:rgba(255,255,255,0.4)"></div>
<div class="a" style="left:231px;top:649px;width:767px;height:1px;background:rgba(255,255,255,0.4)"></div>
<div class="a" style="left:231px;top:669px;width:767px;height:1px;background:rgba(255,255,255,0.4)"></div>
<div class="a" style="left:231px;top:689px;width:767px;height:1px;background:rgba(255,255,255,0.4)"></div>
<div class="a" style="left:231px;top:709px;width:767px;height:1px;background:rgba(255,255,255,0.4)"></div>
<div class="a" style="left:231px;top:729px;width:767px;height:1px;background:rgba(255,255,255,0.4)"></div>
<div class="a" style="left:231px;top:749px;width:767px;height:1px;background:rgba(255,255,255,0.4)"></div>
<div class="a" style="left:231px;top:769px;width:767px;height:1px;background:rgba(255,255,255,0.4)"></div>
<div class="a" style="left:274px;top:211px;width:1px;height:562px;background:rgba(255,255,255,0.4)"></div>
<div class="a" style="left:381px;top:211px;width:1px;height:562px;background:rgba(255,255,255,0.4)"></div>
<div class="a" style="left:581px;top:211px;width:1px;height:562px;background:rgba(255,255,255,0.4)"></div>
<div class="a" style="left:707px;top:211px;width:1px;height:562px;background:rgba(255,255,255,0.4)"></div>
<div class="a" style="left:801px;top:211px;width:1px;height:562px;background:rgba(255,255,255,0.4)"></div>
<div class="a" style="left:893px;top:211px;width:1px;height:562px;background:rgba(255,255,255,0.4)"></div>
<div class="a" style="left:983px;top:211px;width:1px;height:562px;background:rgba(255,255,255,0.4)"></div>
<div class="a" style="left:275px;top:210px;width:1px;height:563px;background:#839797"></div>
<div class="a" style="left:382px;top:210px;width:1px;height:563px;background:#839797"></div>
<div class="a" style="left:582px;top:210px;width:1px;height:563px;background:#839797"></div>
<div class="a" style="left:708px;top:210px;width:1px;height:563px;background:#839797"></div>
<div class="a" style="left:802px;top:210px;width:1px;height:563px;background:#839797"></div>
<div class="a" style="left:894px;top:210px;width:1px;height:563px;background:#839797"></div>
<div class="a" style="left:984px;top:210px;width:1px;height:563px;background:#839797"></div>
<div class="a" style="left:231px;top:210px;width:44px;height:20px;background:#ffff00"></div>
<div class="t c" style="left:232px;top:210px">1</div>
<div class="a" style="left:230px;top:118px;width:1px;height:655px;background:#808080"></div>
<div class="a" style="left:998px;top:118px;width:17px;height:655px;background:linear-gradient(90deg,#e8e8e8,#f2f2f2 50%,#ececec)"></div>
<svg style="left:1002px;top:124px" width="9" height="6" viewBox="0 0 9 6"><path d="M0.5 5.5L4.5 0.5L8.5 5.5Z" fill="#3a3a3a"/></svg>
<svg style="left:1002px;top:762px" width="9" height="6" viewBox="0 0 9 6"><path d="M0.5 0.5L4.5 5.5L8.5 0.5Z" fill="#3a3a3a"/></svg>
<div class="a" style="left:998px;top:136px;width:16px;height:497px;border:1px solid #909090;border-radius:2px;background:linear-gradient(90deg,#f4f4f4,#e6e6e6 50%,#d2d2d2 51%,#c8c8c8)"></div>
<div class="a" style="left:1002px;top:380px;width:8px;height:1px;background:#555"></div><div class="a" style="left:1002px;top:383px;width:8px;height:1px;background:#555"></div><div class="a" style="left:1002px;top:386px;width:8px;height:1px;background:#555"></div>
<div class="a" style="left:231px;top:773px;width:767px;height:18px;background:linear-gradient(#e8e8e8,#f2f2f2 50%,#ececec)"></div>
<svg style="left:236px;top:778px" width="6" height="9" viewBox="0 0 6 9"><path d="M5.5 0.5L0.5 4.5L5.5 8.5Z" fill="#3a3a3a"/></svg>
<svg style="left:986px;top:778px" width="6" height="9" viewBox="0 0 6 9"><path d="M0.5 0.5L5.5 4.5L0.5 8.5Z" fill="#3a3a3a"/></svg>
<div class="a" style="left:249px;top:774px;width:530px;height:16px;border:1px solid #909090;border-radius:2px;background:linear-gradient(#f4f4f4,#e6e6e6 50%,#d2d2d2 51%,#c8c8c8)"></div>
<div class="a" style="left:510px;top:778px;width:1px;height:7px;background:#555"></div><div class="a" style="left:513px;top:778px;width:1px;height:7px;background:#555"></div><div class="a" style="left:516px;top:778px;width:1px;height:7px;background:#555"></div>
<div class="a" style="left:998px;top:773px;width:17px;height:18px;background:#c4c4c4"></div>
<svg style="left:0;top:0" width="1025" height="801" viewBox="0 0 1025 801"><ellipse cx="149.3" cy="174.3" rx="57.3" ry="8.6" fill="none" stroke="#ff0000" stroke-width="3.4"/><path d="M270 82.8H556C575 82.2 585.5 85 585.5 90.8C585.5 96.5 575 98.6 556 98.6H270C252 99.6 241.5 97 241.5 91.5C241.5 86 252 82.8 270 82.8Z" fill="none" stroke="#ff0000" stroke-width="3.2"/><rect x="706.6" y="162.4" width="95" height="42" rx="26" ry="20" fill="none" stroke="#ff0000" stroke-width="3.2"/></svg>
</body></html>
